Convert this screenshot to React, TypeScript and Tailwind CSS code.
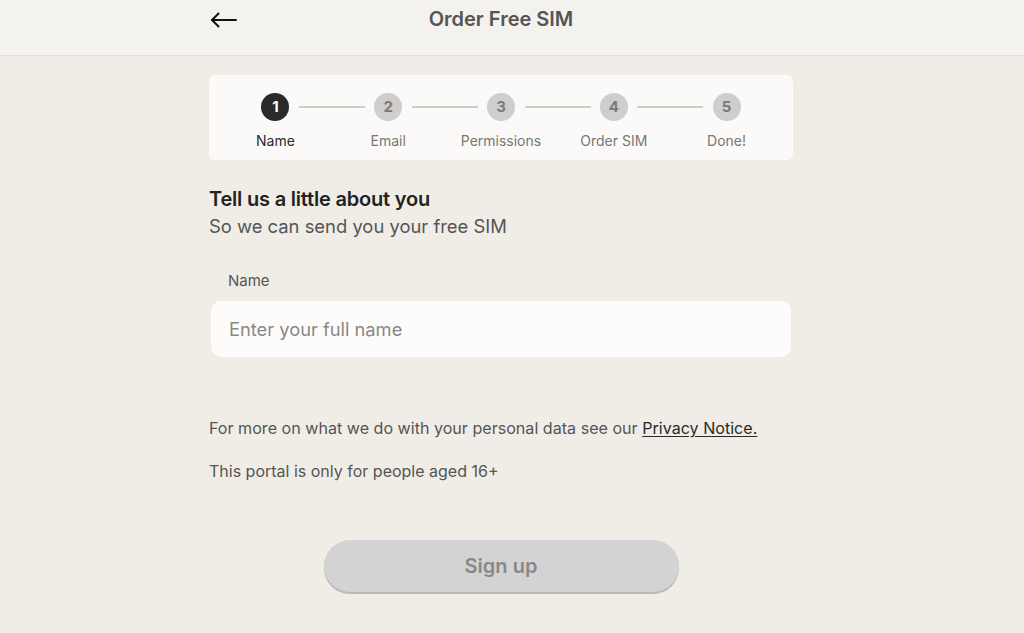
const steps = ["Name", "Email", "Permissions", "Order SIM", "Done!"];

function BackArrow() {
  return (
    <svg width="28" height="20" viewBox="0 0 28 20" fill="none" stroke="#111" strokeWidth="2" strokeLinecap="round" strokeLinejoin="round">
      <path d="M2 10h24" />
      <path d="M8.5 3.5 2 10l6.5 6.5" />
    </svg>
  );
}

function Stepper({ current }: { current: number }) {
  return (
    <div className="mt-[19px] flex h-[85px] rounded-[6px] bg-[#fbfaf8] px-[10px] pt-[18px]">
      {steps.map((label, i) => (
        <div key={label} className="relative flex w-[113px] flex-col items-center">
          {/* connector to next step */}
          {i < steps.length - 1 && (
            <div className="absolute left-[80px] top-[13px] h-[2px] w-[66px] bg-[#cfcdca]" />
          )}
          <div
            className={
              i === current
                ? "flex h-[28px] w-[28px] items-center justify-center rounded-full bg-[#2a2a2a] text-[15px] font-bold text-white"
                : "flex h-[28px] w-[28px] items-center justify-center rounded-full bg-[#cfcecc] text-[15px] font-bold text-[#7a7a7a]"
            }
          >
            {i + 1}
          </div>
          <div
            className={
              i === current
                ? "mt-[11px] text-[14px] leading-[18px] text-[#2a2a2a]"
                : "mt-[11px] text-[14px] leading-[18px] text-[#777]"
            }
          >
            {label}
          </div>
        </div>
      ))}
    </div>
  );
}

export default function App() {
  return (
    <div className="min-h-[633px] bg-[#f0ede7] font-['Inter',sans-serif]">
      <header className="h-[56px] border-b border-[#e3e0da] bg-[#f3f2ee]">
        <div className="w-[1002px]">
          <div className="relative mx-auto flex h-[55px] w-[584px] items-start justify-center pt-[5px]">
            <button type="button" className="absolute left-[1px] top-[10px]">
              <BackArrow />
            </button>
            <h1 className="text-[20px] font-semibold leading-[28px] text-[#555]">Order Free SIM</h1>
          </div>
        </div>
      </header>

      <div className="w-[1002px]">
        <main className="mx-auto w-[584px]">
          <Stepper current={0} />

          <h2 className="mt-[25px] text-[20px] font-semibold leading-[28px] tracking-[-0.2px] text-[#222]">
            Tell us a little about you
          </h2>
          <p className="text-[18.4px] leading-[26px] text-[#555]">So we can send you your free SIM</p>

          <label className="mt-[31px] block pl-[19px] text-[15px] leading-[22px] text-[#555]">Name</label>
          <input
            type="text"
            placeholder="Enter your full name"
            className="mx-[2px] mt-[9px] block h-[56px] w-[580px] rounded-[10px] bg-[#fdfcfa] px-[18px] text-[18.3px] text-[#333] outline-none placeholder:text-[#888]"
          />

          <p className="mt-[59px] text-[16.1px] leading-[24px] text-[#555]">
            For more on what we do with your personal data see our{" "}
            <a href="#" className="text-[#2a2a2a] underline underline-offset-2">
              Privacy Notice.
            </a>
          </p>
          <p className="mt-[19px] text-[16px] leading-[24px] text-[#555]">This portal is only for people aged 16+</p>

          <div className="mt-[57px] flex justify-center">
            <button
              type="button"
              disabled
              className="h-[52px] w-[355px] rounded-full bg-[#d3d3d3] text-[20px] font-semibold text-[#888] shadow-[0_2px_0_#b9b8b5]"
            >
              Sign up
            </button>
          </div>
        </main>
      </div>
    </div>
  );
}
